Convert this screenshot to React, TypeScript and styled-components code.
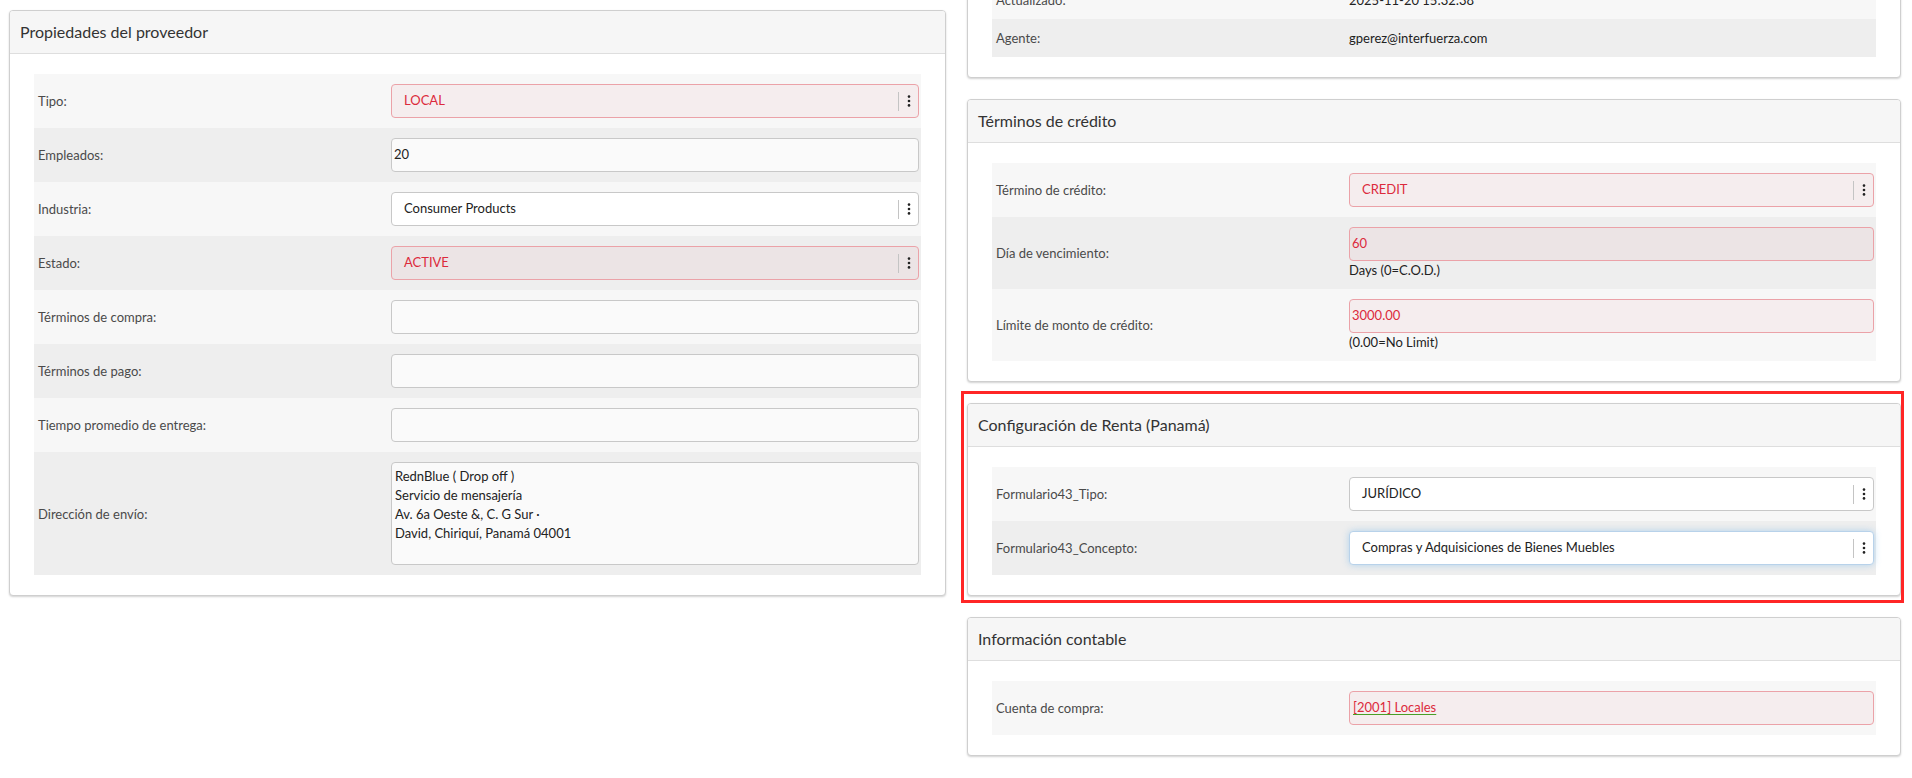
import * as React from 'react';
import styled, { createGlobalStyle, css } from 'styled-components';

const RED = '#dc2a3c';

const GlobalStyle = createGlobalStyle`
  html, body {
    margin: 0;
    padding: 0;
    background: #fff;
    overflow: hidden;
  }
  body {
    font-family: Lato, 'Liberation Sans', sans-serif;
    font-size: 13px;
    color: #222;
  }
`;

const Page = styled.div`
  display: grid;
  grid-template-columns: 937px 934px;
  column-gap: 21px;
  align-items: start;
  padding: 10px 11px 0 9px;
  height: 778px;
  box-sizing: border-box;
`;

const Column = styled.div<{ $shift?: number }>`
  display: flex;
  flex-direction: column;
  gap: 21px;
  margin-top: ${(p) => p.$shift || 0}px;
`;

const Panel = styled.section`
  border: 1px solid #cfcfcf;
  border-radius: 4px;
  background: #fff;
  box-shadow: 0 1px 2px rgba(0, 0, 0, 0.18);
  overflow: hidden;
`;

const PanelHeader = styled.h3`
  margin: 0;
  height: 42px;
  display: flex;
  align-items: center;
  padding: 0 10px 2px;
  box-sizing: border-box;
  height: 43px;
  background: #f6f6f6;
  border-bottom: 1px solid #dedede;
  font-size: 16px;
  font-weight: 400;
  color: #333;
`;

const PanelBody = styled.div`
  padding: 20px 24px;
`;

const Highlight = styled.div`
  position: relative;
  &::after {
    content: '';
    position: absolute;
    top: -12px;
    left: -6px;
    right: -3px;
    bottom: -7px;
    border: 3px solid #ff2626;
    pointer-events: none;
  }
`;

const Row = styled.div`
  display: grid;
  grid-template-columns: 353px 1fr;
  align-items: center;
  padding: 10px 2px 10px 4px;
  background: #f7f7f7;
  &:nth-child(even) {
    background: #eeeeee;
  }
`;

const Label = styled.span`
  color: #4a4a4a;
  font-size: 13px;
`;

const Value = styled.span`
  color: #222;
  line-height: 18px;
`;

const boxBase = css<{ $error?: boolean }>`
  box-sizing: border-box;
  width: 100%;
  border: 1px solid ${(p) => (p.$error ? '#eba2a8' : '#c8c8c8')};
  border-radius: 4px;
  background: ${(p) => (p.$error ? 'rgba(220, 53, 69, 0.05)' : '#fafafa')};
  color: ${(p) => (p.$error ? RED : '#222')};
  font-family: inherit;
  font-size: 13px;
`;

const TextInput = styled.input<{ $error?: boolean }>`
  ${boxBase}
  display: block;
  height: 34px;
  padding: 0 2px 2px;
  outline: none;
`;

const TextArea = styled.textarea`
  ${boxBase}
  display: block;
  height: 103px;
  padding: 4px 3px;
  line-height: 19px;
  resize: none;
  outline: none;
`;

const Select = styled.div<{ $error?: boolean; $focus?: boolean }>`
  ${boxBase}
  display: flex;
  align-items: center;
  height: 34px;
  padding: 0 0 0 12px;
  background: ${(p) => (p.$error ? 'rgba(220, 53, 69, 0.05)' : '#fff')};
  ${(p) =>
    p.$focus &&
    css`
      border-color: #b8d2ea;
      box-shadow: 0 0 7px rgba(102, 175, 233, 0.45);
    `}
`;

const LinkBox = styled.div`
  ${boxBase}
  display: flex;
  align-items: center;
  height: 34px;
  padding: 0 3px 2px;
`;

const SelectText = styled.span`
  flex: 1;
  padding-bottom: 3px;
`;

const Kebab = styled.span`
  display: flex;
  align-items: center;
  justify-content: center;
  height: 19px;
  width: 19px;
  border-left: 1px solid #c4c4c4;
`;

const Help = styled.div`
  line-height: 18px;
  color: #222;
`;

const Link = styled.a`
  color: ${RED};
  text-decoration: underline;
  text-decoration-color: #4a9e26;
  text-underline-offset: 2px;
`;

const Dots = () => (
  <svg width="4" height="12" viewBox="0 0 4 12">
    <circle cx="2" cy="1.6" r="1.3" fill="#222" />
    <circle cx="2" cy="6" r="1.3" fill="#222" />
    <circle cx="2" cy="10.4" r="1.3" fill="#222" />
  </svg>
);

const SelectField: React.FC<{ value: React.ReactNode; error?: boolean; focus?: boolean }> = ({
  value,
  error,
  focus,
}) => (
  <Select $error={error} $focus={focus}>
    <SelectText>{value}</SelectText>
    <Kebab>
      <Dots />
    </Kebab>
  </Select>
);

const address = 'RednBlue ( Drop off )\nServicio de mensajería\nAv. 6a Oeste &, C. G Sur ·\nDavid, Chiriquí, Panamá 04001';

export default function App() {
  return (
    <>
      <GlobalStyle />
      <Page>
        <Column>
          <Panel>
            <PanelHeader>Propiedades del proveedor</PanelHeader>
            <PanelBody>
              <Row>
                <Label>Tipo:</Label>
                <SelectField value="LOCAL" error />
              </Row>
              <Row>
                <Label>Empleados:</Label>
                <TextInput readOnly value="20" />
              </Row>
              <Row>
                <Label>Industria:</Label>
                <SelectField value="Consumer Products" />
              </Row>
              <Row>
                <Label>Estado:</Label>
                <SelectField value="ACTIVE" error />
              </Row>
              <Row>
                <Label>Términos de compra:</Label>
                <TextInput readOnly value="" />
              </Row>
              <Row>
                <Label>Términos de pago:</Label>
                <TextInput readOnly value="" />
              </Row>
              <Row>
                <Label>Tiempo promedio de entrega:</Label>
                <TextInput readOnly value="" />
              </Row>
              <Row>
                <Label>Dirección de envío:</Label>
                <TextArea readOnly value={address} />
              </Row>
            </PanelBody>
          </Panel>
        </Column>

        <Column $shift={-93}>
          <Panel>
            <PanelHeader>Información del sistema</PanelHeader>
            <PanelBody>
              <Row>
                <Label>Actualizado:</Label>
                <Value>2025-11-20 15:32:38</Value>
              </Row>
              <Row>
                <Label>Agente:</Label>
                <Value>gperez@interfuerza.com</Value>
              </Row>
            </PanelBody>
          </Panel>

          <Panel>
            <PanelHeader>Términos de crédito</PanelHeader>
            <PanelBody>
              <Row>
                <Label>Término de crédito:</Label>
                <SelectField value="CREDIT" error />
              </Row>
              <Row>
                <Label>Día de vencimiento:</Label>
                <div>
                  <TextInput $error readOnly value="60" />
                  <Help>Days (0=C.O.D.)</Help>
                </div>
              </Row>
              <Row>
                <Label>Límite de monto de crédito:</Label>
                <div>
                  <TextInput $error readOnly value="3000.00" />
                  <Help>(0.00=No Limit)</Help>
                </div>
              </Row>
            </PanelBody>
          </Panel>

          <Highlight>
            <Panel>
              <PanelHeader>Configuración de Renta (Panamá)</PanelHeader>
              <PanelBody>
                <Row>
                  <Label>Formulario43_Tipo:</Label>
                  <SelectField value="JURÍDICO" />
                </Row>
                <Row>
                  <Label>Formulario43_Concepto:</Label>
                  <SelectField value="Compras y Adquisiciones de Bienes Muebles" focus />
                </Row>
              </PanelBody>
            </Panel>
          </Highlight>

          <Panel>
            <PanelHeader>Información contable</PanelHeader>
            <PanelBody>
              <Row>
                <Label>Cuenta de compra:</Label>
                <LinkBox $error>
                  <Link href="#">[2001] Locales</Link>
                </LinkBox>
              </Row>
            </PanelBody>
          </Panel>
        </Column>
      </Page>
    </>
  );
}
